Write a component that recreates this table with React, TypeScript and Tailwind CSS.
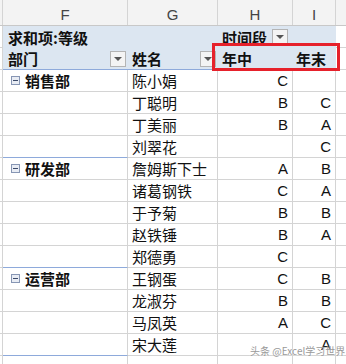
const groups = [
  {
    dept: '销售部',
    rows: [
      ['陈小娟', 'C', ''],
      ['丁聪明', 'B', 'C'],
      ['丁美丽', 'B', 'A'],
      ['刘翠花', '', 'C'],
    ],
  },
  {
    dept: '研发部',
    rows: [
      ['詹姆斯下士', 'A', 'B'],
      ['诸葛钢铁', 'C', 'A'],
      ['于予菊', 'B', 'B'],
      ['赵铁锤', 'B', 'A'],
      ['郑德勇', 'C', ''],
    ],
  },
  {
    dept: '运营部',
    rows: [
      ['王钢蛋', 'C', 'B'],
      ['龙淑芬', 'B', 'B'],
      ['马凤英', 'A', 'C'],
      ['宋大莲', '', 'A'],
    ],
  },
];

function DropBtn() {
  return (
    <div className="w-[16px] h-[16px] border border-[#b4b4b4] bg-[#f4f4f4] flex items-center justify-center">
      <div className="w-0 h-0 border-l-[4px] border-r-[4px] border-t-[4px] border-l-transparent border-r-transparent border-t-[#555]" />
    </div>
  );
}

function Collapse() {
  return (
    <div className="w-[9px] h-[9px] border border-[#8796b4] bg-[#e8ecf4] flex items-center justify-center">
      <div className="w-[5px] h-px bg-[#3c4a6a]" />
    </div>
  );
}

export default function App() {
  const cjk = { fontFamily: '"Noto Sans CJK SC", "Liberation Sans", sans-serif' };
  return (
    <div className="relative w-[346px] h-[364px] overflow-hidden bg-white text-[#111]" style={cjk}>
      {/* column letters */}
      <div className="flex h-[26px] bg-[#f3f3f3] border-b border-[#c8c8c8] text-[#444] text-[15px] leading-none font-['Liberation_Sans',sans-serif]">
        <div className="w-[3px] border-r border-[#d4d4d4]" />
        <div className="w-[125px] border-r border-[#d4d4d4] flex items-end justify-center pb-[3px]">F</div>
        <div className="w-[90px] border-r border-[#d4d4d4] flex items-end justify-center pb-[3px]">G</div>
        <div className="w-[75px] border-r border-[#d4d4d4] flex items-end justify-center pb-[3px]">H</div>
        <div className="w-[43px] border-r border-[#d4d4d4] flex items-end justify-center pb-[3px]">I</div>
        <div className="flex-1" />
      </div>

      {/* pivot header 1 */}
      <div className="flex h-[22px] text-[15px] font-bold">
        <div className="w-[3px] border-r border-b border-[#d4d4d4]" />
        <div className="w-[215px] bg-[#dce6f1] flex items-center pl-[5px] leading-none">求和项:等级</div>
        <div className="w-[118px] bg-[#dce6f1] flex items-center pl-[4px] gap-[5px] leading-none">
          <span>时间段</span>
          <DropBtn />
        </div>
        <div className="flex-1 border-b border-[#d4d4d4]" />
      </div>

      {/* pivot header 2 */}
      <div className="flex h-[22px] text-[15px] font-bold">
        <div className="w-[3px] border-r border-b border-[#d4d4d4]" />
        <div className="w-[125px] bg-[#dce6f1] border-b border-[#8eaadb] flex items-center justify-between pl-[5px] pr-[2px] leading-none">
          <span>部门</span>
          <DropBtn />
        </div>
        <div className="w-[90px] bg-[#dce6f1] border-b border-[#8eaadb] flex items-center justify-between pl-[4px] pr-[2px] leading-none">
          <span>姓名</span>
          <DropBtn />
        </div>
        <div className="w-[75px] bg-[#dce6f1] border-b border-[#8eaadb] flex items-center pl-[4px] leading-none">年中</div>
        <div className="w-[43px] bg-[#dce6f1] border-b border-[#8eaadb] flex items-center pl-[3px] leading-none">年末</div>
        <div className="flex-1 border-b border-[#d4d4d4]" />
      </div>

      {groups.map((g) =>
        g.rows.map((r, i) => {
          const last = i === g.rows.length - 1;
          return (
            <div key={g.dept + r[0]} className="flex h-[22px] text-[15px]">
              <div className="w-[3px] border-r border-b border-[#d4d4d4]" />
              <div
                className={`w-[125px] border-r border-[#d4d4d4] flex items-center gap-[5px] pl-[8px] font-bold leading-none ${
                  last ? 'border-b border-b-[#8eaadb]' : 'border-b'
                }`}
              >
                {i === 0 && (
                  <>
                    <Collapse />
                    <span>{g.dept}</span>
                  </>
                )}
              </div>
              <div className="w-[90px] border-r border-b border-[#d4d4d4] flex items-center pl-[4px] leading-none">{r[0]}</div>
              <div className="w-[75px] border-r border-b border-[#d4d4d4] flex items-center justify-end pr-[4px] leading-none font-['Liberation_Sans',sans-serif]">{r[1]}</div>
              <div className="w-[43px] border-r border-b border-[#d4d4d4] flex items-center justify-end pr-[4px] leading-none font-['Liberation_Sans',sans-serif]">{r[2]}</div>
              <div className="flex-1 border-b border-[#d4d4d4]" />
            </div>
          );
        })
      )}

      <div className="flex h-[22px]">
        <div className="w-[3px] border-r border-[#d4d4d4]" />
        <div className="w-[125px] border-r border-[#d4d4d4]" />
        <div className="w-[90px] border-r border-[#d4d4d4]" />
        <div className="w-[75px] border-r border-[#d4d4d4]" />
        <div className="w-[43px] border-r border-[#d4d4d4]" />
      </div>

      {/* highlight box */}
      <div className="absolute left-[212px] top-[43px] w-[128px] h-[28px] border-[3px] border-[#e6212b]" />

      {/* watermark */}
      <div className="absolute left-[250px] top-[346px] text-[10px] text-[#9a9a9a] leading-none whitespace-nowrap [text-shadow:0_0_2px_#fff]">
        头条 @Excel学习世界
      </div>
    </div>
  );
}
